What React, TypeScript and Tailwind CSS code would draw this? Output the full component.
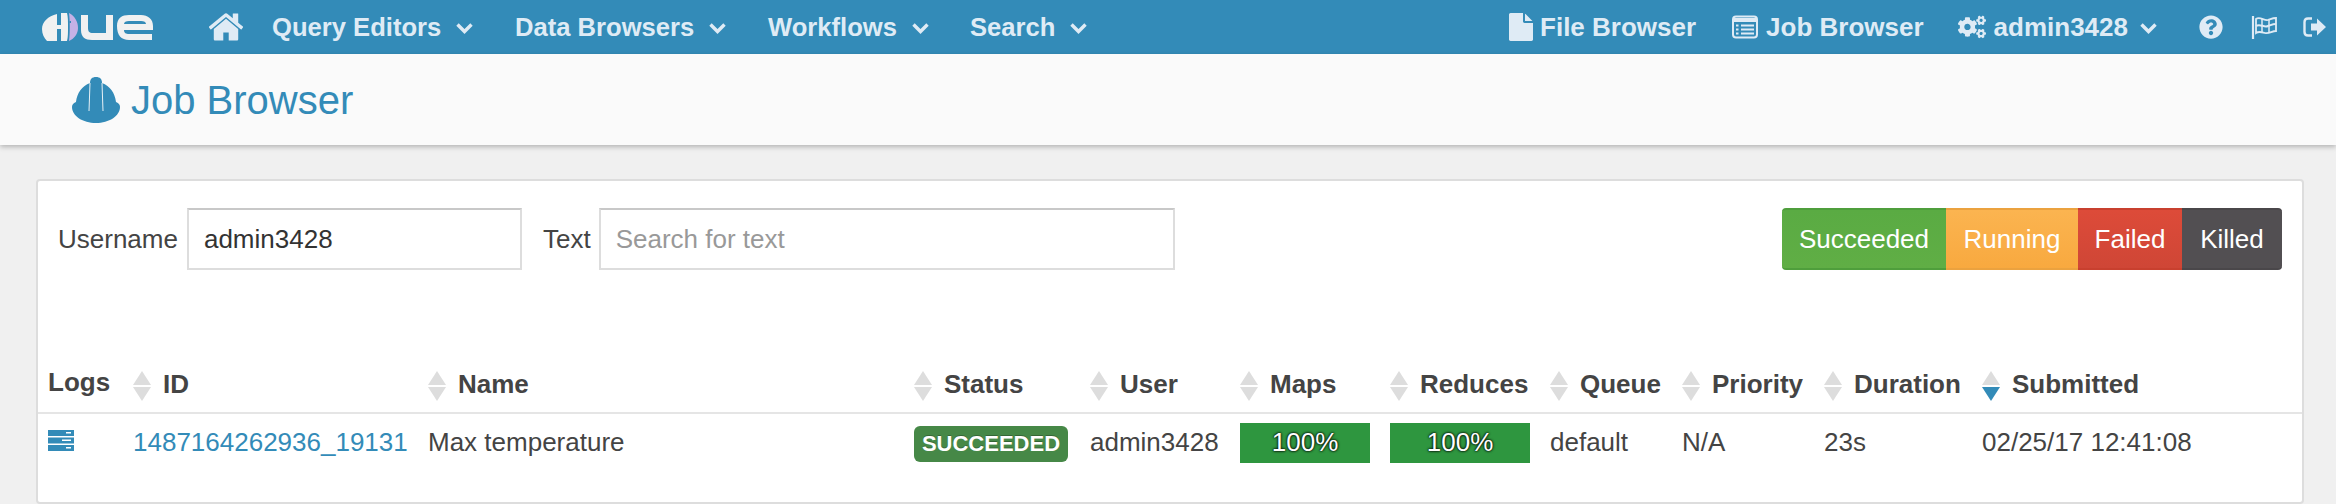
import { FaCogs, FaQuestionCircle } from "react-icons/fa";

function Chevron({ className }: { className?: string }) {
  return (
    <svg viewBox="0 0 17 11" className={`h-[11px] w-[17px] ${className ?? ""}`} fill="none" stroke="currentColor" strokeWidth="3.4">
      <polyline points="1.5,1.5 8.5,8.5 15.5,1.5" />
    </svg>
  );
}

function HomeIcon() {
  return (
    <svg viewBox="0 0 1792 1792" className="h-[38px] w-[38px]" fill="currentColor">
      <path d="M1472 992v480q0 26-19 45t-45 19h-384v-384h-256v384h-384q-26 0-45-19t-19-45v-480q0-1 .5-3t.5-3l575-474 575 474q1 2 1 6zm223-69l-62 74q-8 9-21 11h-3q-13 0-21-7l-692-577-692 577q-12 8-24 7-13-2-21-11l-62-74q-8-10-7-23.5t11-21.5l719-599q32-26 76-26t76 26l244 204v-195q0-14 9-23t23-9h192q14 0 23 9t9 23v408l219 182q10 8 11 21.5t-7 23.5z" />
    </svg>
  );
}

function FileIcon() {
  return (
    <svg viewBox="0 0 1536 1792" className="h-[28px] w-[24px]" fill="currentColor">
      <path d="M1024 512v-472q22 14 36 28l408 408q14 14 28 36h-472zm-128 32q0 40 28 68t68 28h544v1056q0 40-28 68t-68 28h-1344q-40 0-68-28t-28-68v-1600q0-40 28-68t68-28h800v544z" />
    </svg>
  );
}

function ListIcon() {
  return (
    <svg viewBox="0 0 26 24" className="h-[24px] w-[26px]" fill="none" stroke="currentColor">
      <rect x="1" y="1.5" width="24" height="21" rx="3" strokeWidth="2" />
      <path d="M1 5 H25" strokeWidth="4" />
      <path d="M4 10.5 H6.5 M4 14.5 H6.5 M4 18.5 H6.5 M9 10.5 H22 M9 14.5 H22 M9 18.5 H22" strokeWidth="2" />
    </svg>
  );
}

function FlagIcon() {
  return (
    <svg viewBox="0 0 26 24" className="ml-[28px] h-[24px] w-[26px]" fill="none" stroke="currentColor">
      <path d="M2 1 V24" strokeWidth="2.2" />
      <path d="M5 4 C9 1 13 6 17 5 C20 4 22 3 25 3 V16 C21 16 18 19 14 18 C10 17 8 16 5 18 Z" strokeWidth="1.8" />
      <path d="M5 11 C9 8 13 13 17 11 C20 10 22 9 25 9" strokeWidth="2" />
      <path d="M11 4 V17 M18 5 V17" strokeWidth="1.5" />
    </svg>
  );
}

function ExitIcon() {
  return (
    <svg viewBox="0 0 24 20" className="ml-[26px] h-[20px] w-[24px]">
      <path d="M9 1.5 H5 Q1.5 1.5 1.5 5 V15 Q1.5 18.5 5 18.5 H9" fill="none" stroke="currentColor" strokeWidth="2.4" />
      <path d="M8 6.5 H14 V1.5 L23 10 L14 18.5 V13.5 H8 Z" fill="currentColor" />
    </svg>
  );
}

function HueLogo() {
  return (
    <svg viewBox="0 0 111 28" className="h-[28px] w-[111px]">
      <path
        d="M15 1 C6 3 0 9 0 16 C0 21 2 25 5 28 H15 V16 H19 V28 H25 C26 24 26 20 26 14 C26 8 26 4 25 0 H19 V12 H15 Z"
        fill="#f1f1f1"
      />
      <path d="M27 0 C33 3 36 9 36 15 C36 21 32 26 27 28 C28 20 28 8 27 0 Z" fill="#c5b1e6" />
      <rect x="27.5" y="8" width="1.5" height="2" fill="#338bb8" />
      <path d="M39 2 V17 C39 24 43 27 50 27 H71 V2 H64 V20 H51 C47 20 46 18 46 15 V2 Z" fill="#f1f1f1" />
      <path
        d="M75 13 C75 5 80 2 87 2 H99 C106 2 111 6 111 13 V17 H82 C82 20 84 21 87 21 H110 V27 H87 C79 27 75 22 75 13 Z M82 11 H104 C104 9 102 8 99 8 H87 C84 8 82 9 82 11 Z"
        fill="#f1f1f1"
      />
    </svg>
  );
}

function HardHat() {
  return (
    <svg viewBox="0 0 48 46" className="h-[46px] w-[48px]">
      <path
        d="M18 6 C18 2 20 0 24 0 C28 0 30 2 30 6 C38 9 43 16 44 25 C47 26 48 28 48 30 C48 39 37 46 24 46 C11 46 0 39 0 30 C0 28 1 26 4 25 C5 16 10 9 18 6 Z"
        fill="#338bb8"
      />
      <path d="M18 6 L17 34 M30 6 L31 34" stroke="#e8f1f6" strokeWidth="1" fill="none" />
    </svg>
  );
}

function SortArrows({ active }: { active?: boolean }) {
  return (
    <svg viewBox="0 0 18 30" className="h-[30px] w-[18px] shrink-0">
      <path d="M9 0 L18 14 H0 Z" fill="#dddddd" />
      <path d="M0 16 H18 L9 30 Z" fill={active ? "#338bb8" : "#dddddd"} />
    </svg>
  );
}

function LogsIcon() {
  return (
    <svg viewBox="0 0 26 21" className="-mt-[4px] h-[21px] w-[26px]">
      <rect x="0" y="0" width="26" height="6" fill="#338bb8" />
      <rect x="0" y="7.5" width="26" height="6" fill="#338bb8" />
      <rect x="0" y="15" width="26" height="6" fill="#338bb8" />
      <rect x="18" y="2" width="5" height="1.5" fill="#fff" />
      <rect x="14" y="9.5" width="9" height="1.5" fill="#fff" />
      <rect x="18" y="17" width="5" height="1.5" fill="#fff" />
    </svg>
  );
}

const navItems = [
  { label: "Query Editors", width: "w-[243px]" },
  { label: "Data Browsers", width: "w-[253px]" },
  { label: "Workflows", width: "w-[202px]" },
  { label: "Search", width: "w-auto" },
];

const columns = [
  { label: "ID", width: "w-[295px]" },
  { label: "Name", width: "w-[486px]" },
  { label: "Status", width: "w-[176px]" },
  { label: "User", width: "w-[150px]" },
  { label: "Maps", width: "w-[150px]" },
  { label: "Reduces", width: "w-[160px]" },
  { label: "Queue", width: "w-[132px]" },
  { label: "Priority", width: "w-[142px]" },
  { label: "Duration", width: "w-[158px]" },
  { label: "Submitted", width: "", active: true },
];

const filters = [
  { label: "Succeeded", className: "w-[164px] rounded-l-[4px] border-[#4f9e3c] bg-gradient-to-b from-[#5aab43] to-[#60ae45]" },
  { label: "Running", className: "w-[132px] border-[#eba23f] bg-gradient-to-b from-[#fbb450] to-[#f8a93f]" },
  { label: "Failed", className: "w-[104px] border-[#c8402f] bg-gradient-to-b from-[#dd4b39] to-[#cf4636]" },
  { label: "Killed", className: "w-[100px] rounded-r-[4px] border-[#4a474a] bg-[#524f52]" },
];

export default function App() {
  return (
    <div className="h-[504px] w-[2336px] overflow-hidden bg-[#f0f0f0] font-['Liberation_Sans',Arial,sans-serif] text-[26px] text-[#444444]">
      <nav className="flex h-[54px] items-center bg-[#338bb8] pl-[42px] pr-[9px] font-bold text-[#dfebf5]">
        <HueLogo />
        <div className="ml-[54px]">
          <HomeIcon />
        </div>
        <div className="ml-[27px] flex items-center">
          {navItems.map((item) => (
            <a key={item.label} className={`flex items-center gap-[15px] text-[25.6px] ${item.width}`}>
              {item.label}
              <Chevron className="mt-[3px]" />
            </a>
          ))}
        </div>
        <div className="ml-auto flex items-center">
          <a className="flex items-center gap-[7px]">
            <FileIcon />
            File Browser
          </a>
          <a className="ml-[36px] flex items-center gap-[8px]">
            <ListIcon />
            Job Browser
          </a>
          <a className="ml-[34px] flex items-center gap-[8px]">
            <FaCogs className="h-[28px] w-[28px]" />
            admin3428
            <Chevron className="ml-[4px] mt-[3px]" />
          </a>
          <FaQuestionCircle className="ml-[42px] h-[24px] w-[24px]" />
          <FlagIcon />
          <ExitIcon />
        </div>
      </nav>

      <header className="flex h-[91px] items-center gap-[11px] bg-[#fafafa] pl-[72px] shadow-[0_2px_5px_rgba(0,0,0,0.25)]">
        <HardHat />
        <h1 className="text-[40px] leading-none text-[#338bb8]">Job Browser</h1>
      </header>

      <main className="ml-[36px] mr-[32px] mt-[34px] h-[325px] rounded-[4px] border-2 border-[#dddddd] bg-white">
        <div className="flex h-[179px] items-start pl-[20px] pr-[20px] pt-[27px]">
          <label className="flex items-center gap-[9px]">
            Username
            <input
              defaultValue="admin3428"
              className="h-[62px] w-[335px] border-2 border-[#dddddd] border-t-[#c8c8c8] px-[15px] text-[26px] text-[#333333] outline-none"
            />
          </label>
          <label className="ml-[21px] flex items-center gap-[8px]">
            Text
            <input
              placeholder="Search for text"
              className="h-[62px] w-[576px] border-2 border-[#dddddd] border-t-[#c8c8c8] px-[15px] text-[26px] text-[#333333] outline-none placeholder:text-[#999999]"
            />
          </label>
          <div className="ml-auto flex h-[62px] text-white">
            {filters.map((filter) => (
              <button key={filter.label} className={`flex items-center justify-center border-y-2 ${filter.className}`}>
                {filter.label}
              </button>
            ))}
          </div>
        </div>

        <table className="w-full table-fixed border-collapse">
          <thead>
            <tr className="h-[53px] border-b-2 border-[#e5e5e5]">
              <th className="w-[95px] pb-[8px] pl-[10px] text-left font-bold">Logs</th>
              {columns.map((col) => (
                <th key={col.label} className={`text-left font-bold ${col.width}`}>
                  <div className="flex items-center gap-[12px]">
                    <SortArrows active={col.active} />
                    <span className="-mt-[4px]">{col.label}</span>
                  </div>
                </th>
              ))}
            </tr>
          </thead>
          <tbody>
            <tr className="h-[58px]">
              <td className="pl-[10px]">
                <LogsIcon />
              </td>
              <td className="text-[#338bb8]">1487164262936_19131</td>
              <td>Max temperature</td>
              <td>
                <span className="inline-flex h-[36px] w-[154px] items-center justify-center rounded-[6px] bg-[#468847] text-[22px] font-bold text-white [text-shadow:0_-1px_0_rgba(0,0,0,0.25)]">
                  SUCCEEDED
                </span>
              </td>
              <td>admin3428</td>
              <td>
                <div className="flex h-[40px] w-[130px] items-center justify-center bg-[#2e963f] text-white [text-shadow:0_0_3px_#000,0_0_2px_#000]">
                  100%
                </div>
              </td>
              <td>
                <div className="flex h-[40px] w-[140px] items-center justify-center bg-[#2e963f] text-white [text-shadow:0_0_3px_#000,0_0_2px_#000]">
                  100%
                </div>
              </td>
              <td>default</td>
              <td>N/A</td>
              <td>23s</td>
              <td>02/25/17 12:41:08</td>
            </tr>
          </tbody>
        </table>
      </main>
    </div>
  );
}
